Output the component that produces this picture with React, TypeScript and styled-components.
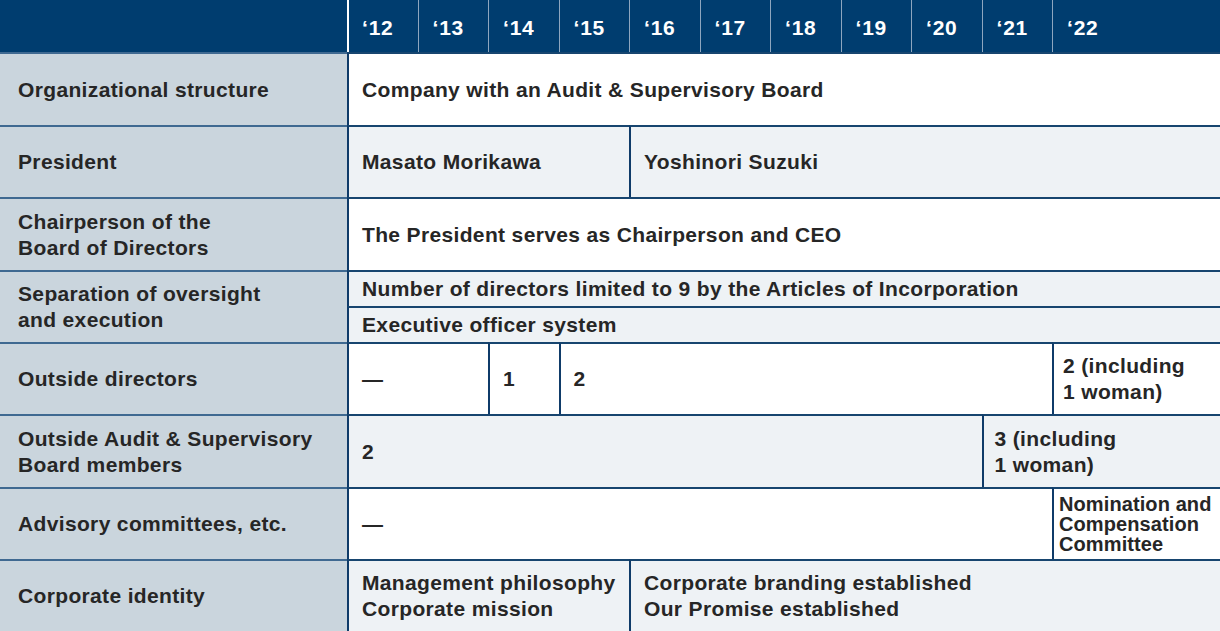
import React from "react";
import styled, { createGlobalStyle } from "styled-components";

const Global = createGlobalStyle`
  html, body { margin: 0; padding: 0; background: #ffffff; }
  body { font-family: "Liberation Sans", Arial, sans-serif; }
`;

const Table = styled.div`
  display: grid;
  grid-template-columns: 347px repeat(10, 70.5px) 1fr;
  grid-template-rows: 52px 73px 72px 73px 36px 36px 72px 73px 72px 72px;
  width: 1220px;
  height: 631px;
  color: #262626;
  font-weight: 700;
  font-size: 21px;
  letter-spacing: 0.35px;
`;

type Pos = { $col: string; $row: string };

const HeaderCorner = styled.div<Pos>`
  grid-column: ${(p) => p.$col};
  grid-row: ${(p) => p.$row};
  background: #003d6f;
`;

const YearCell = styled.div<Pos & { $first?: boolean }>`
  grid-column: ${(p) => p.$col};
  grid-row: ${(p) => p.$row};
  background: #003d6f;
  color: #ffffff;
  font-size: 21px;
  letter-spacing: 0.8px;
  display: flex;
  align-items: center;
  padding-left: ${(p) => (p.$first ? "13px" : "14px")};
  padding-top: 4px;
  box-sizing: border-box;
  border-left: ${(p) => (p.$first ? "2px solid #ffffff" : "1px solid #8ea6bf")};
`;

const LabelCell = styled.div<Pos>`
  grid-column: ${(p) => p.$col};
  grid-row: ${(p) => p.$row};
  background: #cad5dd;
  border-top: 2px solid #3f6991;
  box-sizing: border-box;
  display: flex;
  align-items: center;
  padding: 0 0 0 18px;
  line-height: 26px;
`;

const DataCell = styled.div<Pos & { $shade?: boolean; $tight?: boolean; $pad?: number }>`
  grid-column: ${(p) => p.$col};
  grid-row: ${(p) => p.$row};
  background: ${(p) => (p.$shade ? "#eef2f5" : "#ffffff")};
  border-top: 2px solid #17456f;
  border-left: 2px solid #0f3b69;
  box-sizing: border-box;
  display: flex;
  align-items: center;
  padding: 0 4px 0 ${(p) => p.$pad ?? 13}px;
  font-size: ${(p) => (p.$tight ? "20px" : "21px")};
  line-height: ${(p) => (p.$tight ? "20px" : "26px")};
  letter-spacing: ${(p) => (p.$tight ? "0.1px" : "0.35px")};
`;

const years = ["12", "13", "14", "15", "16", "17", "18", "19", "20", "21", "22"];

export default function App() {
  return (
    <>
      <Global />
      <Table>
        <HeaderCorner $col="1" $row="1" />
        {years.map((y, i) => (
          <YearCell key={y} $col={`${i + 2}`} $row="1" $first={i === 0}>
            {"\u2018" + y}
          </YearCell>
        ))}

        <LabelCell $col="1" $row="2">Organizational structure</LabelCell>
        <DataCell $col="2 / 13" $row="2">Company with an Audit &amp; Supervisory Board</DataCell>

        <LabelCell $col="1" $row="3">President</LabelCell>
        <DataCell $col="2 / 6" $row="3" $shade>Masato Morikawa</DataCell>
        <DataCell $col="6 / 13" $row="3" $shade>Yoshinori Suzuki</DataCell>

        <LabelCell $col="1" $row="4">
          Chairperson of the
          <br />
          Board of Directors
        </LabelCell>
        <DataCell $col="2 / 13" $row="4">The President serves as Chairperson and CEO</DataCell>

        <LabelCell $col="1" $row="5 / 7">
          Separation of oversight
          <br />
          and execution
        </LabelCell>
        <DataCell $col="2 / 13" $row="5" $shade>
          Number of directors limited to 9 by the Articles of Incorporation
        </DataCell>
        <DataCell $col="2 / 13" $row="6" $shade>Executive officer system</DataCell>

        <LabelCell $col="1" $row="7">Outside directors</LabelCell>
        <DataCell $col="2 / 4" $row="7">—</DataCell>
        <DataCell $col="4 / 5" $row="7">1</DataCell>
        <DataCell $col="5 / 12" $row="7">2</DataCell>
        <DataCell $col="12 / 13" $row="7" $pad={9}>
          2 (including
          <br />1 woman)
        </DataCell>

        <LabelCell $col="1" $row="8">
          Outside Audit &amp; Supervisory
          <br />
          Board members
        </LabelCell>
        <DataCell $col="2 / 11" $row="8" $shade>2</DataCell>
        <DataCell $col="11 / 13" $row="8" $shade $pad={11}>
          3 (including
          <br />1 woman)
        </DataCell>

        <LabelCell $col="1" $row="9">Advisory committees, etc.</LabelCell>
        <DataCell $col="2 / 12" $row="9">—</DataCell>
        <DataCell $col="12 / 13" $row="9" $tight $pad={5}>
          Nomination and
          <br />
          Compensation
          <br />
          Committee
        </DataCell>

        <LabelCell $col="1" $row="10">Corporate identity</LabelCell>
        <DataCell $col="2 / 6" $row="10" $shade>
          Management philosophy
          <br />
          Corporate mission
        </DataCell>
        <DataCell $col="6 / 13" $row="10" $shade>
          Corporate branding established
          <br />
          Our Promise established
        </DataCell>
      </Table>
    </>
  );
}
